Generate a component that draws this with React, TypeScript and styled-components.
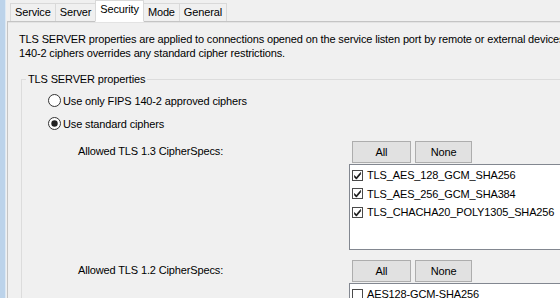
import React from 'react'
import styled, { createGlobalStyle } from 'styled-components'

const GlobalStyle = createGlobalStyle`
  html, body {
    margin: 0;
    padding: 0;
    background: #f0f0f0;
    overflow: hidden;
  }
  body {
    font-family: "Liberation Sans", Arial, sans-serif;
    font-size: 11px;
    letter-spacing: -0.14px;
    color: #000;
  }
`

const tabs = ['Service', 'Server', 'Security', 'Mode', 'General']

const tls13 = ['TLS_AES_128_GCM_SHA256', 'TLS_AES_256_GCM_SHA384', 'TLS_CHACHA20_POLY1305_SHA256']
const tls12 = ['AES128-GCM-SHA256', 'AES256-GCM-SHA384']

const CheckBox = ({ checked }: { checked: boolean }) => (
  <Box viewBox="0 0 11 11" width="11" height="11">
    <rect x="0.5" y="0.5" width="10" height="10" fill="#fff" stroke="#4a4a4a" />
    {checked && <path d="M2.5 5.5 L4.3 7.6 L8.6 2.4 L8.6 4.2 L4.4 9.2 L2.5 7.2 Z" fill="#111" stroke="#111" strokeWidth="0.6" />}
  </Box>
)

const Radio = ({ selected }: { selected: boolean }) => (
  <RadioSvg viewBox="0 0 13 13" width="13" height="13">
    <circle cx="6.5" cy="6.5" r="6" fill="#fff" stroke="#333" />
    {selected && <circle cx="6.5" cy="6.5" r="3.2" fill="#222" />}
  </RadioSvg>
)

const CipherBlock = ({ label, items, checked, first }: { label: string; items: string[]; checked: boolean; first?: boolean }) => (
  <CipherRow first={first}>
    <CipherLabel>{label}</CipherLabel>
    <CipherCol>
      <ButtonRow>
        <Button w={59}>All</Button>
        <Button w={57}>None</Button>
      </ButtonRow>
      <ListBox>
        {items.map((it) => (
          <ListItem key={it}>
            <CheckBox checked={checked} />
            <span>{it}</span>
          </ListItem>
        ))}
      </ListBox>
    </CipherCol>
  </CipherRow>
)

export default function App() {
  return (
    <Window>
      <GlobalStyle />
      <Edge />
      <Main>
        <TabStrip>
          {tabs.map((t) => (
            <Tab key={t} active={t === 'Security'}>{t}</Tab>
          ))}
        </TabStrip>
        <Panel>
          <Intro>
            TLS SERVER properties are applied to connections opened on the service listen port by remote or external devices.
            <br />
            140-2 ciphers overrides any standard cipher restrictions.
          </Intro>
          <Group>
            <Legend>TLS SERVER properties</Legend>
            <RadioRow>
              <Radio selected={false} />
              Use only FIPS 140-2 approved ciphers
            </RadioRow>
            <RadioRow>
              <Radio selected />
              Use standard ciphers
            </RadioRow>
            <CipherBlock label="Allowed TLS 1.3 CipherSpecs:" items={tls13} checked first />
            <CipherBlock label="Allowed TLS 1.2 CipherSpecs:" items={tls12} checked={false} />
          </Group>
        </Panel>
      </Main>
    </Window>
  )
}

const Window = styled.div`
  display: flex;
  width: 560px;
  height: 298px;
  overflow: hidden;
`

const Edge = styled.div`
  width: 5px;
  flex: none;
  background: #bcd3ea;
  border-right: 1px solid #dce9f5;
`

const Main = styled.div`
  flex: 1;
  display: flex;
  flex-direction: column;
  padding-left: 1px;
  min-width: 0;
`

const TabStrip = styled.div`
  display: flex;
  align-items: flex-end;
  height: 22px;
  padding-left: 4px;
  position: relative;
  z-index: 1;
`

const Tab = styled.div<{ active?: boolean }>`
  height: ${(p) => (p.active ? 22 : 18)}px;
  line-height: 17px;
  padding: 0 4px;
  margin-left: -1px;
  border: 1px solid #d9d9d9;
  border-bottom: ${(p) => (p.active ? '1px solid #fff' : 'none')};
  background: ${(p) => (p.active ? '#fff' : '#f0f0f0')};
  box-sizing: border-box;
  margin-bottom: ${(p) => (p.active ? -1 : 0)}px;
  padding-bottom: ${(p) => (p.active ? 3 : 0)}px;
`

const Panel = styled.div`
  flex: 1;
  border-top: 1px solid #c4c4c4;
  border-left: 1px solid #c4c4c4;
  box-shadow: inset 0 1px 0 #e3e3e3;
  padding: 10px 0 0 11px;
  white-space: nowrap;
`

const Intro = styled.div`
  line-height: 14px;
`

const Group = styled.div`
  margin-top: 19px;
  margin-left: 2px;
  border-top: 1px solid #dcdcdc;
  border-left: 1px solid #dcdcdc;
  position: relative;
  padding: 9px 0 0 26px;
`

const Legend = styled.span`
  position: absolute;
  top: -8px;
  left: 4px;
  padding: 0 2px;
  background: #f0f0f0;
  line-height: 14px;
`

const RadioRow = styled.div`
  display: flex;
  align-items: center;
  gap: 2px;
  height: 23px;
`

const RadioSvg = styled.svg`
  flex: none;
`

const Box = styled.svg`
  flex: none;
`

const CipherRow = styled.div<{ first?: boolean }>`
  display: flex;
  margin-top: ${(p) => (p.first ? 6 : 10)}px;
`

const CipherLabel = styled.div`
  width: 271px;
  padding: 3px 0 0 30px;
  flex: none;
  line-height: 14px;
`

const CipherCol = styled.div`
  display: flex;
  flex-direction: column;
  flex: 1;
`

const ButtonRow = styled.div`
  display: flex;
  gap: 4px;
  padding-left: 3px;
  margin-bottom: 1px;
`

const Button = styled.div<{ w: number }>`
  width: ${(p) => p.w}px;
  height: 22px;
  box-sizing: border-box;
  border: 1px solid #adadad;
  background: #e1e1e1;
  display: flex;
  align-items: center;
  justify-content: center;
`

const ListBox = styled.div`
  height: 86px;
  box-sizing: border-box;
  border: 1px solid #828790;
  border-right: none;
  background: #fff;
  padding: 1px 0 0 2px;
`

const ListItem = styled.div`
  display: flex;
  align-items: center;
  gap: 4px;
  height: 18.5px;
`
